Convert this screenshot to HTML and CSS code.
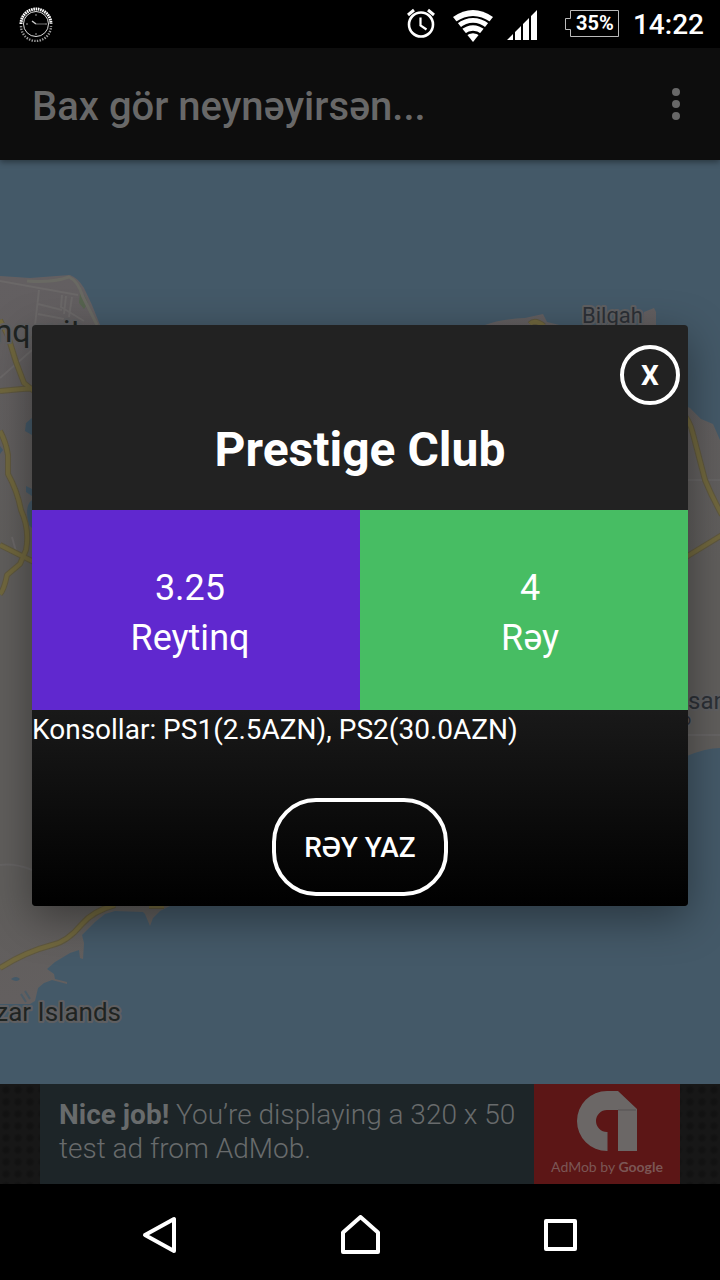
FILE: index.html
```html
<!DOCTYPE html>
<html lang="az">
<head>
<meta charset="utf-8">
<meta name="viewport" content="width=device-width, initial-scale=1">
<title>Prestige Club</title>
<link rel="stylesheet" href="styles.css">
</head>
<body>
<div class="phone">
  <header class="status">
    <svg class="status-clock" viewBox="0 0 36 36" width="36" height="36" fill="none" stroke="#fff" aria-hidden="true">
      <path d="M3 18a15 15 0 0 1 30 0" stroke-width="3" stroke-dasharray="1.6 .7"/>
      <path d="M3 20a15 15 0 0 0 30 0" stroke="#999" stroke-width="2.4" stroke-dasharray="1.4 1.3"/>
      <circle cx="18" cy="18" r="12.5" stroke="#ddd" stroke-width="1"/>
      <path d="M14 15l4 3" stroke="#ccc" stroke-width="1.5"/>
      <path d="M18 18h9" stroke="#777" stroke-width="1"/>
      <path d="M18 8v2M18 27v2M8 18h2M27 18h2" stroke="#999" stroke-width="1"/>
    </svg>
    <div class="status-right">
      <svg class="alarm" viewBox="0 0 28 30" width="28" height="30" fill="none" stroke="#fff" aria-hidden="true">
        <circle cx="14" cy="16.500" r="12" stroke-width="2.600"/>
        <path d="M13.500 9.500v8l6 4" stroke-width="2.200"/>
        <path d="M1 7l6-5M27 7l-6-5" stroke-width="3"/>
      </svg>
      <svg class="wifi" viewBox="0 0 40 32" width="40" height="32" aria-hidden="true">
        <path d="M0 7Q20-7 40 7L20 32z" fill="#fff"/>
        <path d="M3 13Q20 1 37 13M7 19Q20 9 33 19M12 25Q20 19 28 25" fill="none" stroke="#000" stroke-width="2.200"/>
      </svg>
      <svg class="signal" viewBox="0 0 30 30" width="30" height="30" fill="#fff" aria-hidden="true">
        <path d="M0 30l6-6v6zM8 22l6-6v14H8zM16 14l6-6v22h-6zM24 6l6-6v30h-6z"/>
      </svg>
      <div class="battery">
        <svg viewBox="0 0 54 27" width="54" height="27" fill="none" stroke="#bbb" aria-hidden="true">
          <path d="M5.500.5h48v26h-48v-7h-5v-11h5z"/>
        </svg>
        <span class="battery-text">35%</span>
      </div>
      <time class="time">14:22</time>
    </div>
  </header>

  <main class="screen">
    <div class="appbar">
      <h1 class="appbar-title">Bax gör neynəyirsən...</h1>
      <button class="more" type="button" aria-label="Menu">
        <svg viewBox="0 0 8 32" width="8" height="32" fill="#686868"><circle cx="4" cy="4" r="4"/><circle cx="4" cy="16" r="4"/><circle cx="4" cy="28" r="4"/></svg>
      </button>
    </div>

    <div class="map">
      <svg class="map-art" viewBox="0 160 720 924" preserveAspectRatio="xMidYMid slice" aria-hidden="true">
        <defs>
          <linearGradient id="land" gradientUnits="userSpaceOnUse" x1="0" y1="276" x2="0" y2="1000">
            <stop offset="0" stop-color="#635f61"/>
            <stop offset=".4" stop-color="#605e5c"/>
            <stop offset=".85" stop-color="#605e5c"/>
            <stop offset="1" stop-color="#635f5f"/>
          </linearGradient>
        </defs>
        <g fill="url(#land)">
          <path d="M0 276L30 278 70 275Q78 278 84 288L92 305 102 330 160 420V906L170 906 160 911 153 918 150 926 145 914 143 912 115 911 105 914 95 922 82 935 84 943 83 959 80 958 79 950 70 953 55 962 47 969 54 974 55 979 67 982 67 984 52 980 44 983 38 988 35 1001 30 1004H0z"/>
          <path d="M485 325Q500 319 525 318L543 314 547 322 580 330H480zM644 312l10-4 2 4v18h-14z"/>
          <path d="M660 395L690 408 701 419 713 424 720 440V748Q706 748 687 756L640 760z"/>
        </g>
        <g fill="#445968">
          <path d="M32 418l-6 5-1 8 7 4zM32 500q-8 6-3 25l3 3zM0 446l3 4-3 4zM26 486l6 3v7l-6-4z"/>
          <path d="M11 979q5-4 9 0-3 4-9 0z"/>
        </g>
        <path d="M21 994l5 8M25 991l5 8" fill="none" stroke="#4b5b66" stroke-width="2"/>
        <path d="M80 293l4 2 4 8-4 6-5-6z" fill="#56634f"/>
        <g fill="none" stroke="#6b6868" stroke-width="2">
          <path d="M0 281L78 295M39 290l-5 44M62 295l-1 12 23 14M38 304l24 6M38 314l26 5M66 296l-2 18M72 297l-3 20M0 378l32-28M12 537l5 18"/>
          <path d="M0 865q15-2 32 5M687 480h33M687 735h33" stroke="#666464"/>
        </g>
        <path d="M27 281Q52 283 69 277 78 281 83 297L97 325" fill="none" stroke="#696963" stroke-width="3"/>
        <g fill="none" stroke="#5f583f" stroke-width="6" stroke-linejoin="round">
          <path d="M0 320L8 336 16 362 24 383 34 391M0 391L22 389 40 388M0 431Q6 442 8 455L8 474Q17 490 21 510 30 530 26 550L20 564 7 575Q4 590 0 594M0 545L34 562M0 968Q25 952 52 945 67 942 82 924 93 911 115 905M149 906h15M530 324q5-5 14 2M680 410q10 10 13 24L705 480Q712 497 722 515M686 557L722 535"/>
        </g>
        <g class="road-core">
          <path d="M0 320L8 336 16 362 24 383 34 391M0 391L22 389 40 388M0 431Q6 442 8 455L8 474Q17 490 21 510 30 530 26 550L20 564 7 575Q4 590 0 594M0 545L34 562M0 968Q25 952 52 945 67 942 82 924 93 911 115 905M149 906h15M530 324q5-5 14 2M680 410q10 10 13 24L705 480Q712 497 722 515M686 557L722 535"/>
        </g>
        <g class="map-labels">
          <text class="label-city" x="81" y="342" text-anchor="end">Sumqayit</text>
          <text class="label-town" x="582" y="323">Bilgah</text>
          <text class="label-side" x="688" y="709">san</text>
          <text class="label-minor" x="682" y="725">o</text>
          <text class="label-place" x="121" y="1021" text-anchor="end">Khazar Islands</text>
        </g>
      </svg>
    </div>

    <aside class="ad">
      <a class="ad-body" href="#">
        <span class="ad-text"><strong>Nice job!</strong> You’re displaying a 320 x 50 test ad from AdMob.</span>
        <span class="ad-brand">
          <svg viewBox="0 0 60 60" width="60" height="60" aria-hidden="true">
            <path d="M30 60A30 30 0 0 1 30 0H41L60 18V60H41V19H30A11 11 0 0 0 30 41z" fill="#6b6766"/>
            <path d="M30 41V60" stroke="#6b6766" stroke-width="1"/>
            <path d="M41 19h18" stroke="#565252" stroke-width="1"/>
          </svg>
          <span class="ad-by">AdMob by <b>Google</b></span>
        </span>
      </a>
    </aside>

    <div class="overlay">
      <section class="dialog" role="dialog" aria-labelledby="club">
        <div class="dialog-head">
          <button class="close" type="button">X</button>
          <h2 class="dialog-title" id="club">Prestige Club</h2>
        </div>
        <div class="stats">
          <div class="stat stat-rating"><span>3.25</span><span>Reytinq</span></div>
          <div class="stat stat-reviews"><span>4</span><span>Rəy</span></div>
        </div>
        <div class="dialog-body">
          <p class="consoles">Konsollar: PS1(2.5AZN), PS2(30.0AZN)</p>
          <button class="review" type="button">RƏY YAZ</button>
        </div>
      </section>
    </div>
  </main>

  <nav class="nav">
    <button type="button" aria-label="Back">
      <svg viewBox="0 0 40 40" width="40" height="40"><path d="M34 4v32L5 20z"/></svg>
    </button>
    <button type="button" aria-label="Home">
      <svg viewBox="0 0 40 40" width="40" height="40"><path d="M3 17.500L20.500 2 38 17.500V37H3z"/></svg>
    </button>
    <button type="button" aria-label="Recent apps">
      <svg viewBox="0 0 40 40" width="40" height="40"><path d="M6 6h29v28H6z"/></svg>
    </button>
  </nav>
</div>
</body>
</html>
```
FILE: styles.css
```css
* { box-sizing: border-box; }

body {
  margin: 0;
  background: #000;
  color: #fff;
  font-family: Roboto, "Noto Sans", sans-serif;
}

button {
  margin: 0;
  padding: 0;
  border: 0;
  background: none;
  color: inherit;
  font: inherit;
  cursor: pointer;
}

svg { display: block; }

.phone {
  display: flex;
  flex-direction: column;
  min-height: 100vh;
}

/* Status bar */
.status {
  display: flex;
  align-items: center;
  justify-content: space-between;
  height: 48px;
  padding: 0 16px 0 18px;
}

.status-right {
  display: flex;
  align-items: center;
}

.alarm { margin: 0 18px 2px 0; }
.wifi { margin: 3px 14px 0 0; }
.signal { margin: 2px 28px 0 0; }

.battery {
  display: grid;
  place-items: center;
  margin: 0 14px 2px 0;
}

.battery > * { grid-area: 1 / 1; }

.battery-text {
  padding-left: 6px;
  font-size: 20px;
  font-weight: 700;
  line-height: 24px;
}

.time {
  padding-top: 2px;
  font-size: 28px;
  font-weight: 500;
  line-height: 48px;
}

/* App screen */
.screen {
  position: relative;
  display: flex;
  flex: 1;
  flex-direction: column;
}

.appbar {
  position: relative;
  display: flex;
  align-items: center;
  justify-content: space-between;
  height: 112px;
  padding: 0 40px 0 32px;
  background: #0d0d0d;
  box-shadow: 0 2px 6px rgba(0, 0, 0, .4);
  z-index: 1;
}

.appbar-title {
  margin: 0;
  padding-top: 6px;
  color: #686868;
  font-size: 40px;
  font-weight: 500;
  line-height: 48px;
}

.map {
  display: grid;
  flex: 1;
  min-height: 0;
  background: #445968;
}

.map-art {
  width: 100%;
  height: 100%;
}

.road-core {
  fill: none;
  stroke: #70673e;
  stroke-width: 4px;
  stroke-linejoin: round;
}

.map-labels {
  fill: #1f2422;
  paint-order: stroke;
  stroke: #5f5f61;
  stroke-width: 4px;
  stroke-linejoin: round;
}

.label-city { font-size: 32px; }
.label-town { font-size: 22px; fill: #2c3036; }
.label-side { font-size: 24px; fill: #2c3036; }
.label-minor { font-size: 16px; fill: #2c3036; }
.label-place { font-size: 26px; }

/* Ad banner */
.ad {
  display: flex;
  justify-content: center;
  padding: 0 40px;
  background: radial-gradient(circle, #121212 2px, #171717 5px) 0 0 / 12px 12px;
}

.ad-body {
  display: flex;
  flex: 1;
  justify-content: space-between;
  min-height: 100px;
  background: #1d2528;
  color: #686b6c;
  text-decoration: none;
}

.ad-text {
  flex: 1;
  padding: 14px 8px 0 19px;
  font-size: 28px;
  font-weight: 300;
  line-height: 34px;
}

.ad-text strong { font-weight: 700; }

.ad-brand {
  display: flex;
  flex-direction: column;
  align-items: center;
  gap: 6px;
  width: 146px;
  padding-top: 7px;
  background: #5c1616;
}

.ad-by {
  color: #7b5655;
  font-family: Lato, sans-serif;
  font-size: 14px;
  line-height: 20px;
  white-space: nowrap;
}

.ad-by b { font-weight: 700; }

/* Dialog */
.overlay {
  position: absolute;
  inset: 0;
  z-index: 2;
  display: flex;
  align-items: center;
  padding: 0 32px 2px;
}

.dialog {
  flex: 1;
  overflow: hidden;
  border-radius: 4px;
  background: #222;
  box-shadow: 0 12px 44px rgba(0, 0, 0, .4);
}

.dialog-head {
  display: flex;
  flex-direction: column;
  padding: 20px 8px 32px;
}

.close {
  align-self: flex-end;
  width: 60px;
  height: 60px;
  padding-top: 2px;
  border: 4px solid #fff;
  border-radius: 50%;
  font-size: 28px;
  font-weight: 700;
}

.dialog-title {
  margin: 17px 0 0;
  font-size: 48px;
  font-weight: 700;
  line-height: 56px;
  text-align: center;
}

.stats {
  display: grid;
  grid-template-columns: 1fr 1fr;
}

.stat {
  display: flex;
  flex-direction: column;
  align-items: center;
  padding: 53px 0 47px;
  font-size: 36px;
  line-height: 50px;
}

.stat-rating {
  padding-right: 12px;
  background: #6028cf;
}

.stat-reviews {
  padding-left: 12px;
  background: #47bd63;
}

.dialog-body {
  display: flex;
  flex-direction: column;
  align-items: center;
  gap: 48px;
  padding-bottom: 10px;
  background: linear-gradient(#191919, #000);
}

.consoles {
  align-self: stretch;
  margin: 0;
  font-size: 28px;
  line-height: 40px;
}

.review {
  min-width: 176px;
  height: 98px;
  padding: 2px 24px 0;
  border: 4px solid #fff;
  border-radius: 44px;
  font-size: 28px;
  font-weight: 500;
}

/* Navigation bar */
.nav {
  display: flex;
  justify-content: center;
  gap: 160px;
  padding: 31px 0 25px;
}

.nav svg {
  fill: none;
  stroke: #fff;
  stroke-width: 4px;
  stroke-linejoin: round;
}
```
